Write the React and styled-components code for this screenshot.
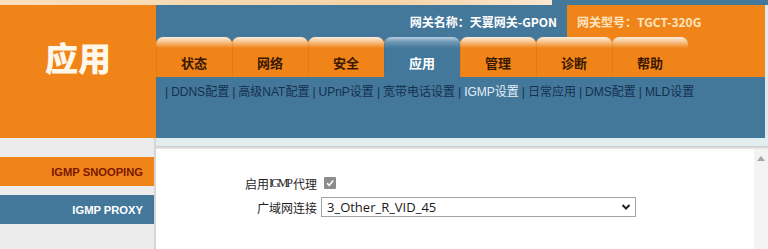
import { createGlobalStyle } from "styled-components";
import styled from "styled-components";

const GlobalStyle = createGlobalStyle`
  html, body {
    margin: 0;
    padding: 0;
    background: #ffffff;
  }
  body {
    font-family: "Liberation Sans", "Noto Sans CJK SC", sans-serif;
    font-size: 12px;
  }
`;

const ORANGE = "#f08419";
const BLUE = "#44789b";

const Page = styled.div`
  width: 768px;
  height: 249px;
  overflow: hidden;
  display: flex;
  flex-direction: column;
`;

const TopStrip = styled.div`
  height: 5px;
  display: flex;
`;

const StripLeft = styled.div`
  flex: 1;
  background: linear-gradient(to right, #f9dfbe, #f7d3a6 70%, #fbe7cf);
`;

const StripRight = styled.div`
  width: 216px;
  background: ${BLUE};
`;

const Header = styled.div`
  display: grid;
  grid-template-columns: 156px 1fr;
  height: 133px;
`;

const Brand = styled.div`
  background: ${ORANGE};
  display: flex;
  align-items: flex-start;
  justify-content: center;
  padding-top: 32px;
  box-sizing: border-box;
  color: #fff7ea;
  font-family: "Noto Sans CJK SC", sans-serif;
  font-weight: 900;
  font-size: 33px;
  line-height: 40px;
`;

const HeaderMain = styled.div`
  display: flex;
  flex-direction: column;
  border-right: 3px solid #dfe9ee;
`;

const TopBar = styled.div`
  height: 32px;
  display: grid;
  grid-template-columns: 411px 1fr;
`;

const GatewayName = styled.div`
  background: ${BLUE};
  color: #ffffff;
  font-family: "Noto Sans CJK SC", sans-serif;
  font-weight: 700;
  font-size: 12px;
  display: flex;
  align-items: center;
  justify-content: flex-end;
  padding-right: 10px;
`;

const GatewayModel = styled.div`
  background: ${ORANGE};
  color: #fde4c0;
  font-family: "Noto Sans CJK SC", sans-serif;
  font-weight: 700;
  font-size: 12px;
  display: flex;
  align-items: center;
  padding-left: 10px;
`;

const TabRow = styled.div`
  height: 40px;
  display: flex;
  background: linear-gradient(${BLUE}, ${BLUE}) 0 0 / 411px 4px no-repeat, ${ORANGE};
`;

const Tab = styled.div`
  width: 76px;
  box-sizing: border-box;
  border-radius: 7px 7px 0 0;
  display: flex;
  align-items: center;
  justify-content: center;
  padding-top: 10px;
  font-family: "Noto Sans CJK SC", sans-serif;
  font-weight: 700;
  font-size: 13px;
  color: ${(p) => (p.$active ? "#ffffff" : "#3b1800")};
  background: ${(p) =>
    p.$active
      ? `linear-gradient(to bottom, #b5cde0 0, #6d97b4 5px, ${BLUE} 11px)`
      : `linear-gradient(to bottom, #fdeede 0, #f8c28a 5px, ${ORANGE} 11px)`};
  box-shadow: inset 1px 0 0 rgba(120, 70, 20, 0.12);
`;

const SubNav = styled.div`
  flex: 1;
  background: ${BLUE};
  padding: 7px 0 0 6px;
  display: flex;
  align-items: flex-start;
  font-family: "Liberation Sans", "Noto Sans CJK SC", sans-serif;
  font-size: 12px;
  line-height: 16px;
  color: #14304f;
`;

const SubLink = styled.span`
  color: ${(p) => (p.$active ? "#e3eef7" : "#14304f")};
`;

const Sep = styled.span`
  margin: 0 3px;
  color: #14304f;
`;

const Body = styled.div`
  flex: 1;
  display: grid;
  grid-template-columns: 156px 1fr;
`;

const Sidebar = styled.div`
  background: #ececec;
  border-right: 2px solid #d6d6d6;
  padding-top: 19px;
  display: flex;
  flex-direction: column;
  gap: 9px;
`;

const SideItem = styled.div`
  height: 29px;
  display: flex;
  align-items: center;
  justify-content: flex-end;
  padding-right: 11px;
  font-family: "Liberation Sans", sans-serif;
  font-weight: 700;
  font-size: 11.2px;
  background: ${(p) => (p.$active ? ORANGE : BLUE)};
  color: ${(p) => (p.$active ? "#7a1700" : "#ffffff")};
`;

const ContentWrap = styled.div`
  display: flex;
  flex-direction: column;
`;

const LightBand = styled.div`
  height: 8px;
  background: #e3eef1;
`;

const Shadow = styled.div`
  height: 3px;
  background: linear-gradient(#c9c9c9, #ececec);
`;

const Content = styled.div`
  flex: 1;
  display: flex;
  background: #ffffff;
`;

const Form = styled.div`
  flex: 1;
  padding-top: 22px;
  display: grid;
  grid-template-columns: 161px 1fr;
  grid-auto-rows: 24px;
  column-gap: 4px;
  align-content: start;
`;

const Label = styled.div`
  display: flex;
  align-items: center;
  justify-content: flex-end;
  font-family: "Noto Sans CJK SC", sans-serif;
  font-size: 12px;
  color: #1e1e1e;
`;

const Latin = styled.span`
  font-family: "Liberation Serif", serif;
  letter-spacing: -2px;
  margin-right: 2px;
`;

const Control = styled.div`
  display: flex;
  align-items: center;
`;

const CheckBox = styled.span`
  width: 12px;
  height: 12px;
  margin-left: 3px;
  background: #8c8c8c;
  border-radius: 1px;
  display: flex;
  align-items: center;
  justify-content: center;
`;

const SelectWrap = styled.div`
  position: relative;
  width: 315px;
  height: 20px;
`;

const Select = styled.select`
  appearance: none;
  width: 100%;
  height: 100%;
  box-sizing: border-box;
  border: 1px solid #a3a3a3;
  border-radius: 0;
  background: #ffffff;
  padding: 0 0 0 5px;
  font-family: "Open Sans", sans-serif;
  font-size: 13px;
  color: #1a1a1a;
  outline: none;
`;

const Chevron = styled.svg`
  position: absolute;
  right: 5px;
  top: 6px;
  pointer-events: none;
`;

const Scrollbar = styled.div`
  width: 14px;
  background: #f3f3f3;
  display: flex;
  justify-content: center;
  padding-top: 7px;
  box-sizing: border-box;
`;

const tabs = ["状态", "网络", "安全", "应用", "管理", "诊断", "帮助"];
const subLinks = [
  "DDNS配置",
  "高级NAT配置",
  "UPnP设置",
  "宽带电话设置",
  "IGMP设置",
  "日常应用",
  "DMS配置",
  "MLD设置",
];

export default function App() {
  return (
    <Page>
      <GlobalStyle />
      <TopStrip>
        <StripLeft />
        <StripRight />
      </TopStrip>
      <Header>
        <Brand>应用</Brand>
        <HeaderMain>
          <TopBar>
            <GatewayName>网关名称：天翼网关-GPON</GatewayName>
            <GatewayModel>网关型号：TGCT-320G</GatewayModel>
          </TopBar>
          <TabRow>
            {tabs.map((t) => (
              <Tab key={t} $active={t === "应用"}>
                {t}
              </Tab>
            ))}
          </TabRow>
          <SubNav>
            {subLinks.map((s) => (
              <span key={s}>
                <Sep>|</Sep>
                <SubLink $active={s === "IGMP设置"}>{s}</SubLink>
              </span>
            ))}
          </SubNav>
        </HeaderMain>
      </Header>
      <Body>
        <Sidebar>
          <SideItem $active>IGMP SNOOPING</SideItem>
          <SideItem>IGMP PROXY</SideItem>
        </Sidebar>
        <ContentWrap>
          <LightBand />
          <Shadow />
          <Content>
            <Form>
              <Label>
                启用<Latin>IGMP</Latin>代理
              </Label>
              <Control>
                <CheckBox>
                  <svg width="10" height="10" viewBox="0 0 10 10">
                    <path d="M2 5.2 L4.2 7.4 L8.2 2.6" fill="none" stroke="#ffffff" strokeWidth="1.6" />
                  </svg>
                </CheckBox>
              </Control>
              <Label>广域网连接</Label>
              <Control>
                <SelectWrap>
                  <Select defaultValue="3_Other_R_VID_45">
                    <option>3_Other_R_VID_45</option>
                  </Select>
                  <Chevron width="10" height="8" viewBox="0 0 10 8">
                    <path d="M1.5 2 L5 5.5 L8.5 2" fill="none" stroke="#222" strokeWidth="2" />
                  </Chevron>
                </SelectWrap>
              </Control>
            </Form>
            <Scrollbar>
              <svg width="8" height="5" viewBox="0 0 8 5">
                <path d="M0 5 L4 0 L8 5 Z" fill="#a6a6a6" />
              </svg>
            </Scrollbar>
          </Content>
        </ContentWrap>
      </Body>
    </Page>
  );
}
